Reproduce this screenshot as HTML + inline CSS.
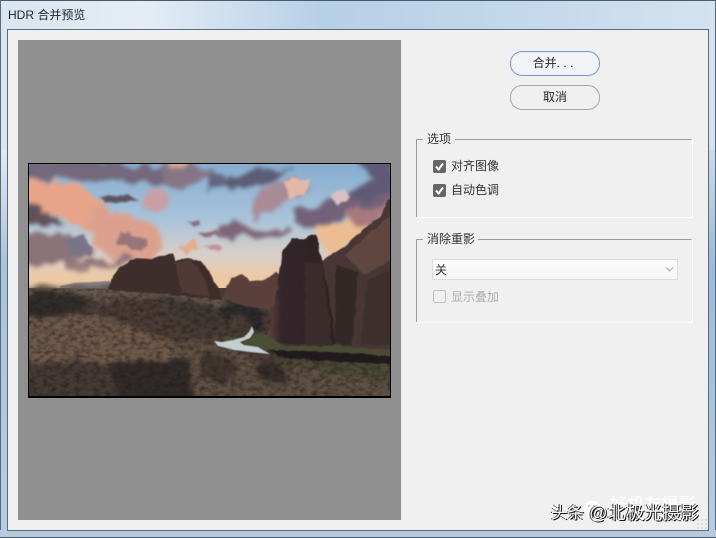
<!DOCTYPE html>
<html lang="zh">
<head>
<meta charset="utf-8">
<title>HDR 合并预览</title>
<style>
html,body{margin:0;padding:0}
body{width:716px;height:538px;position:relative;overflow:hidden;background:#f0f0f0;font-family:"Liberation Sans","Noto Sans CJK SC",sans-serif;font-size:12px;color:#222}
.a{position:absolute}
.t{position:absolute;white-space:nowrap;line-height:16px;font-size:12px;color:#333}
.btn{position:absolute;left:510px;width:88px;height:23px;border-radius:12px;border:1px solid #a8a8a8;text-align:center;line-height:22px;font-size:12px;color:#2a2a2a}
.cb{position:absolute;left:433px;width:13px;height:13px;border-radius:2px;background:#666}
.wm{position:absolute;white-space:nowrap;color:#fff;font-size:18px;line-height:22px;text-shadow:1px 1px 0 #111,-1px 0 0 #333}
</style>
</head>
<body>
<!-- window frame -->
<div class="a" style="left:0;top:0;width:716px;height:538px;background:linear-gradient(90deg,#d9e5f0 0,#e4edf5 20%,#b6d0e8 45%,#c4d9ec 75%,#d4e3f0 100%);border-radius:6px 6px 0 0"></div>
<div class="a" style="left:0;top:0;width:716px;height:1px;background:#4d5a66"></div>
<div class="a" style="left:0;top:0;width:1px;height:538px;background:#5a6a78"></div>
<div class="a" style="left:715px;top:0;width:1px;height:538px;background:#5a6a78"></div>
<div class="a" style="left:1px;top:150px;width:6px;height:380px;background:linear-gradient(#e0eaf3,#a9c3dc 30%,#b6cde2)"></div>
<div class="a" style="left:709px;top:150px;width:6px;height:380px;background:linear-gradient(#c9dbea,#9dbad6 30%,#b6cde2)"></div>
<div class="a" style="left:0;top:530px;width:716px;height:8px;background:#b4cbe0;border-bottom:1px solid #4d5a66;box-sizing:border-box"></div>
<!-- client -->
<div class="a" style="left:7px;top:29px;width:702px;height:502px;box-sizing:border-box;border:1px solid #5c6b78;background:#f0f0f0"></div>
<div class="t" style="left:8px;top:7px;font-size:12px;color:#1c2630">HDR 合并预览</div>

<!-- preview panel -->
<div class="a" style="left:18px;top:40px;width:383px;height:480px;background:#909090"></div>

<!-- photo -->
<svg class="a" style="left:28px;top:163px" width="363" height="235" viewBox="28 163 363 235" xmlns="http://www.w3.org/2000/svg">
<defs>
<linearGradient id="sky" x1="0" y1="0" x2="0" y2="1">
<stop offset="0" stop-color="#86add0"/><stop offset=".45" stop-color="#a9c4da"/><stop offset=".72" stop-color="#d8cfc8"/><stop offset="1" stop-color="#eec79f"/>
</linearGradient>
<linearGradient id="rock" x1="0" y1="0" x2="1" y2="0">
<stop offset="0" stop-color="#6b4640"/><stop offset=".22" stop-color="#33252a"/><stop offset="1" stop-color="#2e2224"/>
</linearGradient>
<filter id="cl" x="-30%" y="-50%" width="160%" height="200%" color-interpolation-filters="sRGB">
<feTurbulence type="fractalNoise" baseFrequency=".05" numOctaves="3" seed="7" result="n"/>
<feDisplacementMap in="SourceGraphic" in2="n" scale="20" xChannelSelector="R" yChannelSelector="G"/>
<feGaussianBlur stdDeviation="2"/>
</filter>
<filter id="cs" x="-30%" y="-80%" width="160%" height="260%" color-interpolation-filters="sRGB">
<feTurbulence type="fractalNoise" baseFrequency=".09" numOctaves="2" seed="3" result="n"/>
<feDisplacementMap in="SourceGraphic" in2="n" scale="9" xChannelSelector="R" yChannelSelector="G"/>
<feGaussianBlur stdDeviation="1"/>
</filter>
<filter id="b6" x="-30%" y="-60%" width="160%" height="220%"><feGaussianBlur stdDeviation="6"/></filter>
<filter id="b1" x="-10%" y="-30%" width="120%" height="160%"><feGaussianBlur stdDeviation=".5"/></filter>
<filter id="gd" x="-5%" y="-5%" width="110%" height="110%" color-interpolation-filters="sRGB">
<feTurbulence type="fractalNoise" baseFrequency=".06" numOctaves="3" seed="11" result="n"/>
<feDisplacementMap in="SourceGraphic" in2="n" scale="12" xChannelSelector="R" yChannelSelector="G"/>
<feGaussianBlur stdDeviation="2.500"/>
</filter>
<filter id="rk" x="-5%" y="-5%" width="110%" height="110%" color-interpolation-filters="sRGB">
<feTurbulence type="fractalNoise" baseFrequency=".12" numOctaves="2" seed="5" result="n"/>
<feDisplacementMap in="SourceGraphic" in2="n" scale="4" xChannelSelector="R" yChannelSelector="G"/>
<feGaussianBlur stdDeviation=".6"/>
</filter>
<filter id="noise" x="0" y="0" width="100%" height="100%" color-interpolation-filters="sRGB"><feTurbulence type="fractalNoise" baseFrequency=".16 .24" numOctaves="2" seed="4"/><feColorMatrix values="0 0 0 0 .12  0 0 0 0 .09  0 0 0 0 .08  0 0 0 1.2 -.45"/></filter>
<clipPath id="clip"><rect x="29" y="164" width="361" height="232"/></clipPath>
</defs>
<rect x="28" y="163" width="363" height="235" fill="#000"/>
<g clip-path="url(#clip)">
<rect x="29" y="164" width="361" height="125" fill="url(#sky)"/>
<!-- clouds -->
<g filter="url(#cl)">
<path d="M20 160H110L165 170 165 186 120 180 85 182 60 178 20 182Z" fill="#73687c"/>
<path d="M160 165H212L212 175 180 190 165 186Z" fill="#857586"/>
<path d="M165 160H195L188 172 172 173Z" fill="#d9a795"/>
<path d="M20 178 70 182 100 200 117 222 100 232 75 222 50 216 20 212Z" fill="#e8a489"/>
<path d="M20 205 50 216 66 224 40 224 20 222Z" fill="#60505a"/>
<path d="M100 205 125 214 160 228 165 245 150 258 120 262 95 245 85 222Z" fill="#dca18e"/>
<path d="M20 233 60 232 85 245 95 255 70 262 45 262 20 268Z" fill="#8b7279"/>
<path d="M145 193 160 190 166 200 158 214 146 206Z" fill="#c99fa4"/>
<path d="M68 262 120 258 135 262 95 270 72 268Z" fill="#8f7277"/>
<path d="M205 172 228 176 232 188 215 192 205 190Z" fill="#65657f"/>
<path d="M230 176 265 170 298 164 270 182 250 190 228 192Z" fill="#5c5c74"/>
<path d="M252 192 275 182 312 180 300 195 278 206 258 218 252 205Z" fill="#a98b98"/>
<path d="M222 225 240 222 265 230 292 230 270 240 240 234 220 235Z" fill="#7c6678"/>
<path d="M290 215 320 205 345 195 395 165V205L350 218 325 228 295 224Z" fill="#726178"/>
<path d="M355 160H395V195L365 200 345 195 370 178Z" fill="#605a76"/>
<path d="M318 228 350 222 375 222 355 245 330 252 318 240Z" fill="#ecbd92"/>
<path d="M350 215 390 198 390 215 355 225Z" fill="#a8797c"/>
</g>
<g filter="url(#cs)">
<path d="M120 232 140 235 150 245 135 250 118 244Z" fill="#97757a"/>
<path d="M65 240 85 235 92 255 72 255Z" fill="#7a7488"/>
<path d="M100 196 125 195 142 199 118 204 105 202Z" fill="#5d5363"/>
<path d="M187 222 198 220 202 226 190 228Z" fill="#80707f"/>
<path d="M196 233 215 230 222 235 205 237Z" fill="#8f6f74"/>
<path d="M178 246 192 241 200 248 186 255Z" fill="#e5ab8f"/>
<path d="M205 246 218 245 222 250 208 252Z" fill="#c09096"/>
<path d="M285 180 310 178 308 192 290 200Z" fill="#e3b8a8"/>
<path d="M330 196 345 188 350 198 338 205Z" fill="#d9c0c4"/>
</g>
<g filter="url(#b6)"><rect x="29" y="272" width="290" height="16" fill="#efc9a2" opacity=".8"/></g>
<!-- distant -->
<path d="M60 286 75 283 110 281 110 288H60Z" fill="#85848a" filter="url(#b1)"/>
<!-- ground base -->
<rect x="29" y="288" width="361" height="108" fill="#4b3d36"/>
<g filter="url(#gd)">
<path d="M22 287H110L215 295 235 305V312L110 302H22Z" fill="#665850"/>
<path d="M22 296 60 292 85 298 90 318 70 320 22 316Z" fill="#322d2a"/>
<path d="M110 298 160 296 230 316 262 338 240 348 180 325 130 312Z" fill="#4a3c37"/>
<path d="M160 298 212 304 222 335 190 322Z" fill="#3f3835"/>
<path d="M22 318 90 314 130 326 170 340 210 350 150 364 22 362Z" fill="#6f5a4a"/>
<path d="M170 338 215 345 255 358 290 366 395 384V400H190Z" fill="#605044"/>
<path d="M22 362 100 362 120 400H22Z" fill="#443a36"/>
<path d="M110 362 190 362 195 400H118Z" fill="#302a29"/>
<path d="M205 352 225 355 240 370 225 385 200 375Z" fill="#41352f"/>
<path d="M258 360 285 368 288 384 262 380Z" fill="#352d29"/>
<path d="M215 308 235 303 258 306 264 322 256 336 250 322 238 314 222 316Z" fill="#2a2b2c"/>
<path d="M225 335 245 338 240 345 215 345Z" fill="#4e5136"/>
<path d="M270 360 395 362V382L340 374 270 364Z" fill="#4c4a36"/>
</g>
<rect x="29" y="289" width="361" height="107" filter="url(#noise)"/>
<g filter="url(#rk)">
<!-- left mesa -->
<path d="M108 290 112 275 122 266 135 258 150 259 163 255 172 254 176 260 188 258 200 262 210 272 216 285 222 300 170 294Z" fill="#3d2d2b"/>
<path d="M175 262 188 260 198 266 205 280 210 297 182 292Z" fill="#4f3a36"/>
<!-- mid mound -->
<path d="M222 298 232 278 242 274 250 280 262 280 276 272 285 282 270 310 240 305Z" fill="#5b3f3a"/>
<!-- right cliff -->
<path d="M320 262 345 246 365 228 380 218 388 200 395 198V352H300L322 300Z" fill="#473633"/>
<path d="M345 255 370 232 395 212V258L365 275Z" fill="#5f473f"/>
<path d="M335 265 358 272 352 345 335 345Z" fill="#342827"/>
<path d="M368 280 390 270 395 345 360 345Z" fill="#3d2f2e"/>
<!-- big rock -->
<path d="M266 343 276 295 283 250 293 238 304 240 312 234 317 235 322 262 330 300 336 346Z" fill="url(#rock)"/>
<path d="M305 262 322 264 332 345 305 345Z" fill="#3b2b2b"/>
<path d="M236 335 258 330 266 343 240 340Z" fill="#3e3833"/>
<!-- green belt -->
<path d="M242 338 262 332 285 346 335 346 395 350V362L330 354 280 352 245 347Z" fill="#4a4c34"/>
<path d="M268 350 330 352 395 357V364L330 361 285 358Z" fill="#1e1b1a"/>
</g>
<!-- river -->
<path d="M252 326 249 332 244 337 233 340 222 342 214 341 218 346 234 350 250 352 270 354 258 347 244 345 240 342 250 338 254 332Z" fill="#c3ced2" filter="url(#b1)"/>
</g>
</svg>

<!-- buttons -->
<div class="btn" style="top:51px;border-color:#7f9cc6;height:23px;background:#f2f4f8;box-shadow:inset 0 0 0 1px #e9eff8;text-indent:-4px">合并. . .</div>
<div class="btn" style="top:85px;height:23px">取消</div>

<!-- groups -->
<svg class="a" style="left:410px;top:130px" width="290" height="200" xmlns="http://www.w3.org/2000/svg">
<path d="M6.500 87.500V9.500H13M45 9.500H281.500" fill="none" stroke="#9c9c9c"/>
<path d="M6 87.500H282.500V10" fill="none" stroke="#fff"/>
<path d="M6.500 192.500V109.500H13M68 109.500H281.500" fill="none" stroke="#9c9c9c"/>
<path d="M6 192.500H282.500V110" fill="none" stroke="#fff"/>
</svg>
<div class="t" style="left:427px;top:131px">选项</div>
<div class="cb" style="top:160px"></div>
<svg class="a" style="left:433px;top:160px" width="13" height="13"><path d="M3 6.500 5.500 9.500 10 3.500" fill="none" stroke="#fff" stroke-width="2"/></svg>
<div class="t" style="left:451px;top:158px">对齐图像</div>
<div class="cb" style="top:184px"></div>
<svg class="a" style="left:433px;top:184px" width="13" height="13"><path d="M3 6.500 5.500 9.500 10 3.500" fill="none" stroke="#fff" stroke-width="2"/></svg>
<div class="t" style="left:451px;top:182px">自动色调</div>

<div class="t" style="left:427px;top:231px">消除重影</div>
<div class="a" style="left:432px;top:259px;width:246px;height:21px;box-sizing:border-box;border:1px solid #dcdcdc;background:linear-gradient(#fbfbfb,#f6f6f6)"></div>
<div class="t" style="left:435px;top:262px">关</div>
<svg class="a" style="left:665px;top:266px" width="9" height="7"><path d="M1 1.500 4.500 5 8 1.500" fill="none" stroke="#aaa"/></svg>
<div class="a" style="left:433px;top:290px;width:13px;height:13px;box-sizing:border-box;border:1px solid #c4c4c4;border-radius:2px"></div>
<div class="t" style="left:451px;top:289px;color:#aeaeae">显示叠加</div>

<!-- watermark -->
<div class="a" style="left:696px;top:518px;width:12px;height:11px;background-image:radial-gradient(#d2d2d2 1px,transparent 1px);background-size:4px 4px"></div>
<div class="a" style="left:610px;top:494px;white-space:nowrap;color:#fff;font-size:17px;line-height:22px;letter-spacing:.2px">好机友摄影</div>
<svg class="a" style="left:580px;top:496px" width="24" height="24"><path d="M4 10C7 3 17 3 20 9 22 16 17 19 12 20L7 22 8 18C4 16 3 13 4 10Z" fill="#fff"/><circle cx="9" cy="10" r="1" fill="#aaa"/><circle cx="14" cy="10" r="1" fill="#aaa"/></svg>
<div class="wm" style="left:551px;top:502px;font-size:16.500px">头条</div>
<div class="wm" style="left:589px;top:502px;font-size:18.300px">@北极光摄影</div>
</body>
</html>
